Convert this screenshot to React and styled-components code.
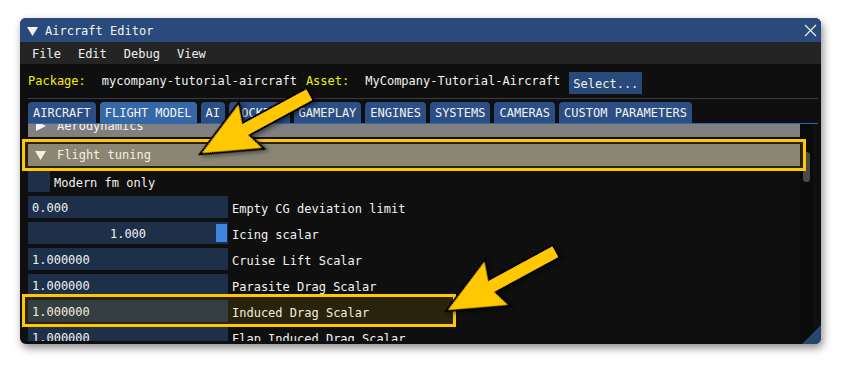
import React from 'react';
import styled, { createGlobalStyle } from 'styled-components';

const GlobalStyle = createGlobalStyle`
  html, body {
    margin: 0;
    padding: 0;
    background: #ffffff;
  }
  body {
    font-family: 'DejaVu Sans Mono', 'Liberation Mono', monospace;
    font-size: 12px;
  }
`;

const Page = styled.div`
  position: relative;
  width: 842px;
  height: 366px;
  overflow: hidden;
  padding: 18px 0 0 20px;
  box-sizing: border-box;
`;

const Window = styled.div`
  position: relative;
  width: 801px;
  height: 326px;
  display: flex;
  flex-direction: column;
  background: #0f0f0f;
  border-radius: 6px;
  overflow: hidden;
  box-shadow: 2px 4px 8px rgba(0, 0, 0, 0.45);
  color: #f2f2f2;
`;

const TitleBar = styled.div`
  height: 24px;
  flex: none;
  box-sizing: border-box;
  display: flex;
  align-items: center;
  padding: 1px 4px 0 7px;
  background: #294a7a;
`;

const Title = styled.span`
  margin-left: 7px;
  flex: 1;
  color: #f4f4f4;
`;

const MenuBar = styled.div`
  height: 22px;
  flex: none;
  box-sizing: border-box;
  display: flex;
  align-items: center;
  gap: 17px;
  padding: 2px 0 0 12px;
  background: #242424;
`;

const MenuItem = styled.span`
  color: #f0f0f0;
`;

const Body = styled.div`
  flex: 1;
  min-height: 0;
  display: flex;
  flex-direction: column;
  padding: 8px 3px 3px 8px;
`;

const PackageRow = styled.div`
  height: 22px;
  flex: none;
  display: flex;
  align-items: center;
`;

const Key = styled.span`
  color: #f0f000;
  padding-bottom: 4px;
  margin-right: ${(p) => p.gap}px;
`;

const Value = styled.span`
  padding-bottom: 4px;
  margin-right: ${(p) => p.gap}px;
`;

const Button = styled.div`
  height: 22px;
  padding: 2px 4px 0;
  box-sizing: border-box;
  display: flex;
  align-items: center;
  background: #284a7a;
`;

const Separator = styled.div`
  height: 1px;
  flex: none;
  margin: 4px 0 3px;
  background: #3a3a44;
`;

const TabBar = styled.div`
  flex: none;
  display: flex;
  gap: 4px;
  border-bottom: 1px solid #3468aa;
`;

const Tab = styled.div`
  height: 21px;
  padding: 0 5px;
  display: flex;
  align-items: center;
  border-radius: 4px 4px 0 0;
  background: ${(p) => (p.active ? '#3668a8' : '#2b4e84')};
  color: #f2f2f2;
`;

const ScrollArea = styled.div`
  flex: 1;
  min-height: 0;
  display: flex;
  margin-right: 5px;
`;

const ScrollContent = styled.div`
  flex: 1;
  overflow: hidden;
`;

const Rows = styled.div`
  display: flex;
  flex-direction: column;
  gap: 4px;
  margin-top: -13px;
`;

const Header = styled.div`
  height: ${(p) => (p.open ? 25 : 26)}px;
  flex: none;
  box-sizing: border-box;
  display: flex;
  align-items: center;
  padding: 3px 0 0 7px;
  background: #808080;
  color: #f4f4f4;
`;

const HeaderLabel = styled.span`
  margin-left: 11px;
`;

const Row = styled.div`
  height: 22px;
  flex: none;
  display: flex;
  align-items: center;
  gap: 4px;
`;

const Label = styled.span`
  padding-top: 4px;
`;

const CheckBox = styled.div`
  width: 22px;
  height: 22px;
  background: #1d2f49;
`;

const Field = styled.div`
  position: relative;
  width: 200px;
  height: 22px;
  box-sizing: border-box;
  padding: 2px 4px 0;
  display: flex;
  align-items: center;
  justify-content: ${(p) => (p.center ? 'center' : 'flex-start')};
  background: #1d2f49;
`;

const SliderGrab = styled.div`
  position: absolute;
  right: 1px;
  top: 2px;
  bottom: 2px;
  width: 11px;
  background: #3d85e0;
`;

const ScrollBar = styled.div`
  width: 13px;
  flex: none;
  padding: 28px 3px 0;
  box-sizing: border-box;
  background: #0b0b0b;
`;

const ScrollGrab = styled.div`
  height: 30px;
  border-radius: 4px;
  background: #4a4a4a;
`;

const ResizeGrip = styled.div`
  position: absolute;
  right: 0;
  bottom: 0;
  width: 19px;
  height: 19px;
  background: #26466e;
  clip-path: polygon(100% 0, 100% 100%, 0 100%);
`;

const Overlay = styled.svg`
  position: absolute;
  left: 0;
  top: 0;
  pointer-events: none;
`;

const Triangle = ({ dir }) => (
  <svg width="11" height="10" viewBox="0 0 11 10">
    {dir === 'down' ? (
      <polygon points="0,1 11,1 5.5,10" fill="#f4f4f4" />
    ) : (
      <polygon points="1,0 11,5 1,10" fill="#f4f4f4" />
    )}
  </svg>
);

const CloseIcon = () => (
  <svg width="13" height="13" viewBox="0 0 13 13">
    <path d="M1 1 L12 12 M12 1 L1 12" stroke="#f0f0f0" strokeWidth="1.2" />
  </svg>
);

const Arrow = ({ x, y }) => (
  <g transform={`translate(${x} ${y}) rotate(-28.5)`} filter="url(#arrowShadow)">
    <polygon
      points="0,0 55,-25 49,-6 122,-6 122,6 49,6 55,24"
      fill="#ffc800"
      stroke="#000"
      strokeWidth="4"
      strokeLinejoin="miter"
      paintOrder="stroke"
    />
  </g>
);

const tabs = [
  'AIRCRAFT',
  'FLIGHT MODEL',
  'AI',
  'COCKPIT',
  'GAMEPLAY',
  'ENGINES',
  'SYSTEMS',
  'CAMERAS',
  'CUSTOM PARAMETERS',
];

const fields = [
  { value: '0.000', label: 'Empty CG deviation limit' },
  { value: '1.000', label: 'Icing scalar', slider: true },
  { value: '1.000000', label: 'Cruise Lift Scalar' },
  { value: '1.000000', label: 'Parasite Drag Scalar' },
  { value: '1.000000', label: 'Induced Drag Scalar' },
  { value: '1.000000', label: 'Flap Induced Drag Scalar' },
];

const App = () => (
  <Page>
    <GlobalStyle />
    <Window>
      <TitleBar>
        <Triangle dir="down" />
        <Title>Aircraft Editor</Title>
        <CloseIcon />
      </TitleBar>
      <MenuBar>
        <MenuItem>File</MenuItem>
        <MenuItem>Edit</MenuItem>
        <MenuItem>Debug</MenuItem>
        <MenuItem>View</MenuItem>
      </MenuBar>
      <Body>
        <PackageRow>
          <Key gap={16}>Package:</Key>
          <Value gap={9}>mycompany-tutorial-aircraft</Value>
          <Key gap={16}>Asset:</Key>
          <Value gap={9}>MyCompany-Tutorial-Aircraft</Value>
          <Button>Select...</Button>
        </PackageRow>
        <Separator />
        <TabBar>
          {tabs.map((t) => (
            <Tab key={t} active={t === 'FLIGHT MODEL'}>
              {t}
            </Tab>
          ))}
        </TabBar>
        <ScrollArea>
          <ScrollContent>
            <Rows>
              <Header>
                <Triangle dir="right" />
                <HeaderLabel>Aerodynamics</HeaderLabel>
              </Header>
              <Header open>
                <Triangle dir="down" />
                <HeaderLabel>Flight tuning</HeaderLabel>
              </Header>
              <Row>
                <CheckBox />
                <Label>Modern fm only</Label>
              </Row>
              {fields.map((f) => (
                <Row key={f.label}>
                  <Field center={f.slider}>
                    {f.value}
                    {f.slider && <SliderGrab />}
                  </Field>
                  <Label>{f.label}</Label>
                </Row>
              ))}
            </Rows>
          </ScrollContent>
          <ScrollBar>
            <ScrollGrab />
          </ScrollBar>
        </ScrollArea>
      </Body>
      <ResizeGrip />
    </Window>
    <Overlay width="842" height="366" viewBox="0 0 842 366">
      <defs>
        <filter id="arrowShadow" x="-20%" y="-20%" width="150%" height="160%">
          <feDropShadow dx="2" dy="3" stdDeviation="2" floodColor="#000" floodOpacity="0.45" />
        </filter>
      </defs>
      <rect x="23.5" y="140.5" width="781" height="29" fill="rgba(255,204,0,0.09)" stroke="#ffc800" strokeWidth="3" />
      <rect x="26" y="143" width="776" height="24" fill="none" stroke="#26220f" strokeWidth="2" />
      <rect x="23.5" y="295.5" width="431" height="30" fill="rgba(255,204,0,0.11)" stroke="#ffc800" strokeWidth="3" />
      <Arrow x={202} y={153} />
      <Arrow x={448} y={310} />
    </Overlay>
  </Page>
);

export default App;
